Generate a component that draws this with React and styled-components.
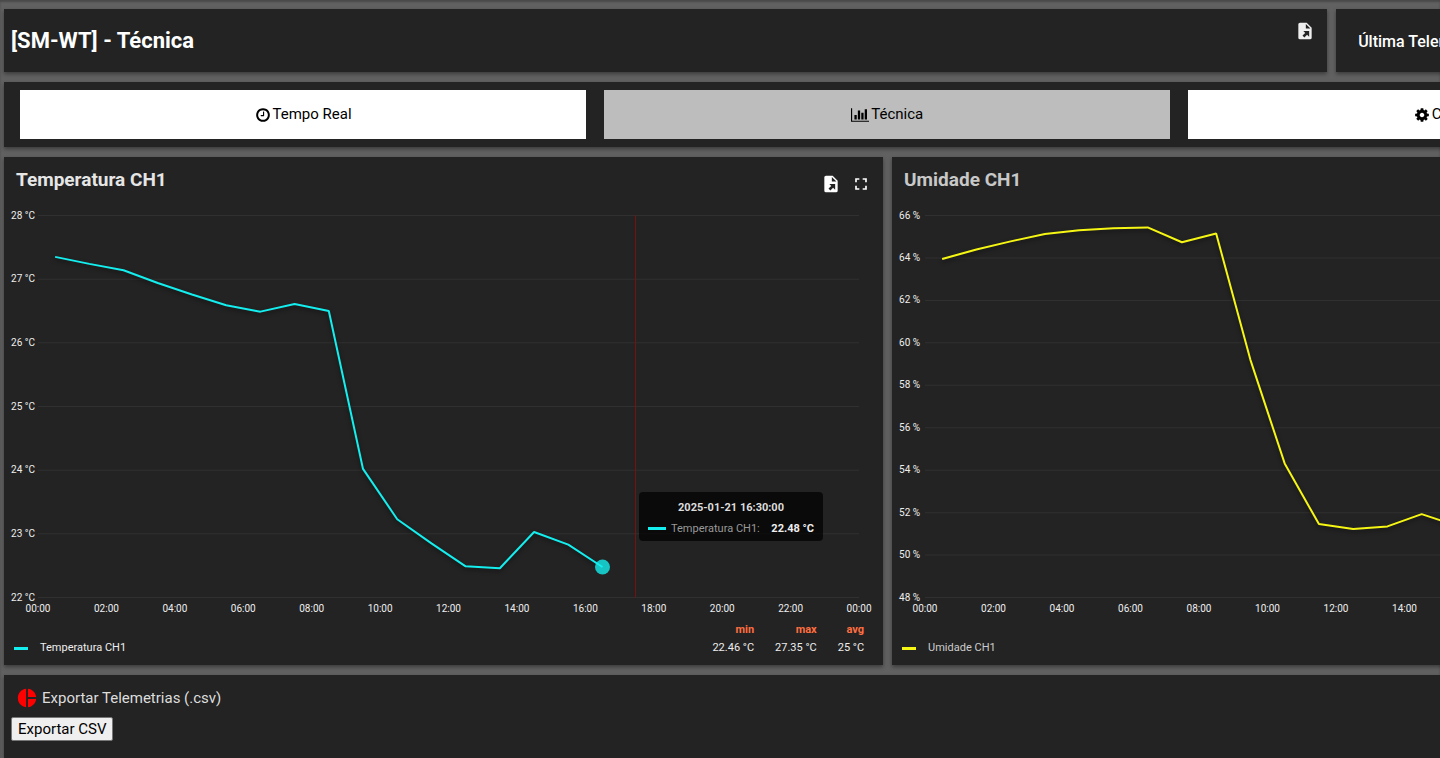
import React from 'react'
import { MdFullscreen, MdPieChart } from 'react-icons/md'
import styled, { createGlobalStyle } from 'styled-components'

const HOURS = [0, 2, 4, 6, 8, 10, 12, 14, 16, 18, 20, 22, 24]

const temperature = {
  title: 'Temperatura CH1',
  color: '#14eeee',
  unit: '°C',
  min: 22,
  max: 28,
  step: 1,
  left: 34,
  values: [
    27.35, 27.24, 27.14, 26.94, 26.76, 26.59, 26.49, 26.61, 26.5, 24.02, 23.23, 22.85, 22.49, 22.46,
    23.03, 22.83, 22.48,
  ],
  stats: { min: '22.46 °C', max: '27.35 °C', avg: '25 °C' },
}

const humidity = {
  title: 'Umidade CH1',
  color: '#f6f614',
  unit: '%',
  min: 48,
  max: 66,
  step: 2,
  left: 33,
  values: [
    63.95, 64.4, 64.78, 65.13, 65.3, 65.4, 65.44, 64.74, 65.15, 59.2, 54.32, 51.46, 51.23, 51.35,
    51.93, 51.4, 51.1,
  ],
}

const PLOT = { width: 879, height: 424, top: 18.5, bottom: 400.5, right: 855 }

export default function App() {
  return (
    <>
      <GlobalStyle />
      <Viewport>
        <Dashboard>
          <TitlePanel>
            <PageTitle>[SM-WT] - Técnica</PageTitle>
            <IconButton aria-label="Exportar painel">
              <FileExportIcon />
            </IconButton>
          </TitlePanel>
          <LastPanel>
            <LastLabel>Última Telemetria</LastLabel>
          </LastPanel>

          <TabsPanel>
            <Tab>
              <FaGlyph viewBox="0 0 1792 1792" d={clockPath} />
              Tempo Real
            </Tab>
            <Tab $active>
              <FaGlyph viewBox="0 0 2048 1792" d={barChartPath} />
              Técnica
            </Tab>
            <Tab>
              <FaGlyph viewBox="0 0 1792 1792" d={cogPath} />
              Configurações
            </Tab>
          </TabsPanel>

          <ChartCard series={temperature} cursor={17.46} tooltip />
          <ChartCard series={humidity} dim />

          <ExportPanel>
            <ExportTitle>
              <MdPieChart size={22} color="#f00" />
              Exportar Telemetrias (.csv)
            </ExportTitle>
            <ExportButton>Exportar CSV</ExportButton>
          </ExportPanel>
        </Dashboard>
      </Viewport>
    </>
  )
}

function ChartCard({ series, cursor, tooltip, dim }) {
  const { title, color, stats } = series

  return (
    <ChartPanel>
      <ChartHeader>
        <ChartTitle $dim={dim}>{title}</ChartTitle>
        <Tools>
          <IconButton aria-label="Exportar dados">
            <FileExportIcon />
          </IconButton>
          <IconButton aria-label="Tela cheia">
            <MdFullscreen size={20} />
          </IconButton>
        </Tools>
      </ChartHeader>
      <PlotArea>
        <LinePlot series={series} cursor={cursor} />
        {tooltip && (
          <Tooltip>
            <TooltipDate>2025-01-21 16:30:00</TooltipDate>
            <TooltipRow>
              <Dash $color={color} $width={18} />
              <span>{title}:</span>
              <TooltipValue>22.48 °C</TooltipValue>
            </TooltipRow>
          </Tooltip>
        )}
      </PlotArea>
      <Legend>
        <LegendName $dim={dim}>
          <Dash $color={color} $width={14} />
          {title}
        </LegendName>
        {stats && (
          <Stats>
            <thead>
              <tr>
                <th scope="col">min</th>
                <th scope="col">max</th>
                <th scope="col">avg</th>
              </tr>
            </thead>
            <tbody>
              <tr>
                <td>{stats.min}</td>
                <td>{stats.max}</td>
                <td>{stats.avg}</td>
              </tr>
            </tbody>
          </Stats>
        )}
      </Legend>
    </ChartPanel>
  )
}

function LinePlot({ series, cursor }) {
  const { min, max, step, left, unit, values, color, title } = series
  const x = (hour) => left + (hour / 24) * (PLOT.right - left)
  const y = (value) => PLOT.bottom - ((value - min) / (max - min)) * (PLOT.bottom - PLOT.top)

  const ticks = []
  for (let v = min; v <= max; v += step) ticks.push(v)

  const points = values.map((v, i) => `${x(i + 0.5)},${y(v)}`).join(' ')
  const last = values.length - 1

  return (
    <Svg viewBox={`0 0 ${PLOT.width} ${PLOT.height}`} role="img" aria-label={title}>
      {ticks.map((v) => (
        <g key={v}>
          <GridLine x1={left} x2={PLOT.right} y1={y(v)} y2={y(v)} />
          <AxisText x={7} y={y(v) + 3}>
            {v} {unit}
          </AxisText>
        </g>
      ))}
      {HOURS.map((h) => (
        <AxisText key={h} x={x(h)} y={415} textAnchor="middle">
          {String(h % 24).padStart(2, '0')}:00
        </AxisText>
      ))}
      {cursor && (
        <CursorBar x={Math.floor(x(cursor))} y={PLOT.top} width="1" height={PLOT.bottom - PLOT.top} />
      )}
      <Series points={points} stroke={color} />
      {cursor && <circle cx={x(last + 0.5)} cy={y(values[last])} r="7.5" fill={color} opacity="0.8" />}
    </Svg>
  )
}

function FileExportIcon() {
  return (
    <svg width="20" height="20" viewBox="0 0 24 24" fill="currentColor" aria-hidden="true">
      <path
        fillRule="evenodd"
        d="M6 2h8l6 6v12a2 2 0 0 1-2 2H6a2 2 0 0 1-2-2V4c0-1.100.9-2 2-2zm7 1.500V9h5.500zM10 12l2.300 2.300-3.300 3.200 2.200 2.200 3.300-3.300 2.500 2.500V12z"
      />
    </svg>
  )
}

function FaGlyph({ viewBox, d }) {
  return (
    <Glyph viewBox={viewBox} aria-hidden="true">
      <path d={d} />
    </Glyph>
  )
}

const clockPath =
  'M1024 544v448q0 14-9 23t-23 9h-320q-14 0-23-9t-9-23v-64q0-14 9-23t23-9h224v-352q0-14 9-23t23-9h64q14 0 23 9t9 23zm416 352q0-148-73-273t-198-198-273-73-273 73-198 198-73 273 73 273 198 198 273 73 273-73 198-198 73-273zm224 0q0 209-103 385.500t-279.500 279.500-385.500 103-385.500-103-279.500-279.500-103-385.500 103-385.500 279.500-279.500 385.500-103 385.500 103 279.500 279.500 103 385.500z'

const barChartPath =
  'M640 896v512h-256v-512h256zm384-512v1024h-256v-1024h256zm1024 1152v128h-2048v-1536h128v1408h1920zm-640-896v768h-256v-768h256zm384-384v1152h-256v-1152h256z'

const cogPath =
  'M1152 896q0-106-75-181t-181-75-181 75-75 181 75 181 181 75 181-75 75-181zm512-109v222q0 12-8 23t-20 13l-185 28q-19 54-39 91 35 50 107 138 10 12 10 25t-9 23q-27 37-99 108t-94 71q-12 0-26-9l-138-108q-44 23-91 38-16 136-29 186-7 28-36 28h-222q-14 0-24.500-8.500t-11.500-21.500l-28-184q-49-16-90-37l-141 107q-10 9-25 9-14 0-25-11-126-114-165-168-7-10-7-23 0-12 8-23 15-21 51-66.500t54-70.500q-27-50-41-99l-183-27q-13-2-21-12.500t-8-23.500v-222q0-12 8-23t19-13l186-28q14-46 39-92-40-57-107-138-10-12-10-24 0-10 9-23 26-36 98.500-107.500t94.500-71.500q13 0 26 10l138 107q44-23 91-38 16-136 29-186 7-28 36-28h222q14 0 24.500 8.500t11.500 21.500l28 184q49 16 90 37l142-107q9-9 24-9 13 0 25 10 129 119 165 170 7 8 7 22 0 12-8 23-15 21-51 66.500t-54 70.500q26 50 41 98l183 28q13 2 21 12.500t8 23.500z'

const GlobalStyle = createGlobalStyle`
  *, *::before, *::after {
    box-sizing: border-box;
  }

  body {
    margin: 0;
    background: #616161;
    color: #eee;
    font-family: Roboto, 'Liberation Sans', sans-serif;
    font-size: 15px;
  }

  button {
    font: inherit;
    cursor: pointer;
  }
`

const Viewport = styled.main`
  height: 100vh;
  overflow: hidden;
  box-shadow: inset 0 2px 2px rgba(0, 0, 0, 0.25);
`

// wider than the window, the dashboard runs off to the right
const Dashboard = styled.div`
  display: grid;
  grid-template-columns: repeat(4, 1fr);
  grid-template-rows: auto auto auto 1fr;
  gap: 10px 9px;
  width: 123%;
  min-height: 100%;
  padding: 9px 0 0 4px;
`

const Panel = styled.section`
  background: #232323;
  box-shadow: 0 2px 4px rgba(0, 0, 0, 0.4);
`

const TitlePanel = styled(Panel)`
  grid-column: span 3;
  display: flex;
  align-items: flex-start;
  justify-content: space-between;
  padding: 12px 12px 11px 7px;
`

const PageTitle = styled.h1`
  margin: 0;
  color: #fff;
  font-size: 22px;
  font-weight: 700;
  line-height: 40px;
`

const LastPanel = styled(Panel)`
  display: flex;
  align-items: center;
  padding: 2px 22px 0;
`

const LastLabel = styled.span`
  color: #fff;
  font-size: 16px;
  font-weight: 500;
  line-height: 24px;
`

const TabsPanel = styled(Panel)`
  grid-column: 1 / -1;
  display: grid;
  grid-template-columns: repeat(3, 1fr);
  gap: 18px;
  padding: 8px 17px 8px 16px;
`

const Tab = styled.button`
  display: flex;
  align-items: center;
  justify-content: center;
  gap: 2px;
  padding: 12px;
  border: 0;
  background: ${(p) => (p.$active ? '#bdbdbd' : '#fff')};
  color: #000;
  line-height: 25px;
`

const Glyph = styled.svg`
  height: 16px;
  fill: currentColor;
`

const ChartPanel = styled(Panel)`
  grid-column: span 2;
  padding-bottom: 8px;
`

const ChartHeader = styled.header`
  display: flex;
  align-items: flex-start;
  justify-content: space-between;
  height: 40px;
  padding: 8px 12px 0;
`

const ChartTitle = styled.h2`
  margin: 0;
  color: ${(p) => (p.$dim ? '#c8c8c8' : '#e6e6e6')};
  font-size: 19px;
  font-weight: 700;
  line-height: 30px;
`

const Tools = styled.div`
  display: flex;
  gap: 10px;
  padding-top: 9px;
  color: #fff;
`

const IconButton = styled.button`
  display: flex;
  padding: 0;
  border: 0;
  background: none;
  color: inherit;
`

const PlotArea = styled.div`
  position: relative;
`

const Svg = styled.svg`
  display: block;
  width: 100%;
`

const GridLine = styled.line`
  stroke: #303030;
`

const AxisText = styled.text`
  fill: #eee;
  font-size: 10px;
`

const CursorBar = styled.rect`
  fill: #7a1010;
`

const Series = styled.polyline`
  fill: none;
  stroke-width: 2;
  stroke-linejoin: bevel;
  filter: drop-shadow(0 2px 2px rgba(0, 0, 0, 0.5));
`

const Tooltip = styled.div`
  position: absolute;
  top: 295px;
  left: 635px;
  min-width: 184px;
  padding: 5px 9px 2px;
  border-radius: 4px;
  background: rgba(0, 0, 0, 0.7);
  color: #999;
  font-size: 11px;
  line-height: 21px;
  white-space: nowrap;
`

const TooltipDate = styled.div`
  color: #ddd;
  font-weight: 700;
  text-align: center;
`

const TooltipRow = styled.div`
  display: flex;
  align-items: center;
  gap: 5px;
`

const TooltipValue = styled.b`
  margin-left: auto;
  color: #eee;
`

const Dash = styled.i`
  width: ${(p) => p.$width}px;
  height: 3px;
  background: ${(p) => p.$color};
`

const Legend = styled.footer`
  display: flex;
  align-items: flex-end;
  justify-content: space-between;
  height: 36px;
  padding: 0 19px 0 10px;
  font-size: 11px;
  line-height: 18px;
`

const LegendName = styled.div`
  display: flex;
  align-items: center;
  gap: 12px;
  color: ${(p) => (p.$dim ? '#ccc' : '#eee')};
`

const Stats = styled.table`
  border-collapse: collapse;
  text-align: right;

  th {
    padding: 0 0 0 21px;
    color: #ff6e40;
    font-weight: 700;
  }

  td {
    padding: 0 0 0 21px;
  }
`

const ExportPanel = styled(Panel)`
  grid-column: 1 / -1;
  padding: 10px 7px;
`

const ExportTitle = styled.h3`
  display: flex;
  align-items: center;
  gap: 4px;
  margin: 0 0 6px;
  padding-left: 5px;
  color: #ddd;
  font-size: 15px;
  font-weight: 400;
  line-height: 26px;
`

const ExportButton = styled.button`
  padding: 1px 6px;
  border: 1px solid #777;
  border-radius: 2px;
  background: #efefef;
  color: #000;
  line-height: 20px;
`
